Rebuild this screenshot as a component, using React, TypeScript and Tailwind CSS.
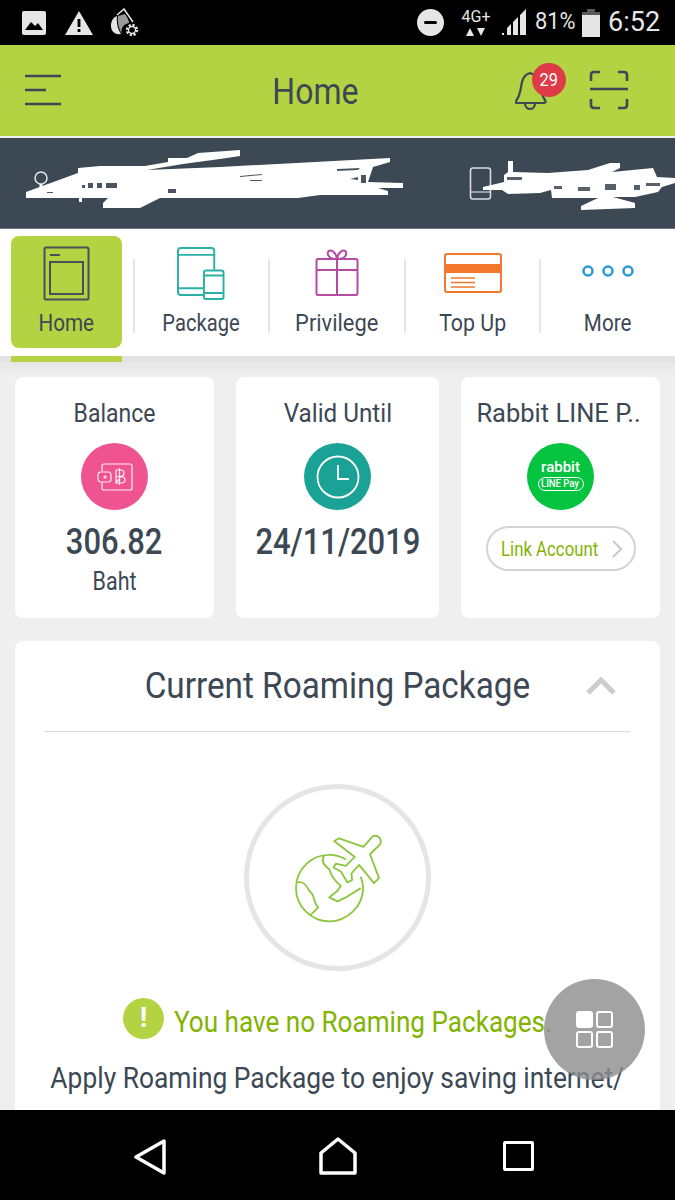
import React from "react";

const Narrow: React.FC<{ children: React.ReactNode; sx?: string; className?: string }> = ({ children, sx = "scale-x-[0.86]", className = "" }) => (
    <span className={`inline-block whitespace-nowrap ${sx} ${className}`}>{children}</span>
);

const StatusBar = () => (
    <div className="h-[45px] bg-black flex items-center text-[#e6e6e6] shrink-0">
        <svg width="26" height="26" viewBox="0 0 26 26" className="ml-[21px]">
            <rect x="1" y="1" width="24" height="24" rx="2" fill="#e6e6e6" />
            <path d="M4 20 L10 12 L14 16 L17 13 L22 20 Z" fill="#000" />
        </svg>
        <svg width="30" height="26" viewBox="0 0 30 26" className="ml-[17px]">
            <path d="M15 1 L29 25 H1 Z" fill="#e6e6e6" />
            <rect x="13.6" y="9" width="2.8" height="8" fill="#000" />
            <rect x="13.6" y="19" width="2.8" height="3" fill="#000" />
        </svg>
        <svg width="30" height="30" viewBox="0 0 30 30" className="ml-[15px]">
            <path d="M2 18 C2 12 5 9 8 8 C7 14 9 22 12 26 C7 27 2 24 2 18 Z" fill="#e6e6e6" />
            <path d="M9 8 L16 6 C18 9 20 12 20 15 C15 16 11 20 13 26 C10 21 8 14 9 8 Z" fill="#9a9a9a" />
            <path d="M8 7 L15 1 L24 14" fill="none" stroke="#e6e6e6" strokeWidth="1.5" />
            <circle cx="23" cy="22" r="5" fill="none" stroke="#e6e6e6" strokeWidth="2.4" strokeDasharray="2.2 1.7" />
            <circle cx="23" cy="22" r="3.500" fill="none" stroke="#e6e6e6" strokeWidth="1.4" />
        </svg>
        <div className="ml-[278px] w-[27px] h-[27px] rounded-full bg-[#e6e6e6] flex items-center justify-center">
            <div className="w-[13px] h-[3px] bg-black rounded-sm" />
        </div>
        <div className="ml-[15px] w-[34px] flex flex-col items-center leading-none">
            <span className="text-[16px] font-['Roboto',sans-serif] whitespace-nowrap">4G+</span>
            <svg width="20" height="8" viewBox="0 0 20 8" className="mt-[3px]">
                <path d="M0 8 L4 0 L8 8 Z M11 0 H19 L15 8 Z" fill="#e6e6e6" />
            </svg>
        </div>
        <svg width="26" height="27" viewBox="0 0 26 27" className="ml-[8px]">
            <path d="M1 26 V24 H3 V26 Z M6 26 V19 L10 15 V26 Z M12 26 V13 L17 8 V26 Z M19 26 V6 L25 0 V26 Z" fill="#e6e6e6" />
        </svg>
        <span className="ml-[8px] text-[23px] font-['Roboto',sans-serif] w-[42px]"><Narrow sx="scale-x-[0.95]" className="origin-left">81%</Narrow></span>
        <svg width="18" height="28" viewBox="0 0 18 28" className="ml-[5px]">
            <path d="M5 0 H13 V3 H18 V28 H0 V3 H5 Z" fill="#5a5a5a" />
            <rect x="0" y="6" width="18" height="22" fill="#e6e6e6" />
        </svg>
        <span className="ml-[8px] text-[27px] font-['Roboto',sans-serif]"><Narrow sx="scale-x-[1]" className="origin-left">6:52</Narrow></span>
    </div>
);

const Header = () => (
    <div className="h-[91px] bg-[#b4d343] flex items-center relative shrink-0">
        <svg width="38" height="32" viewBox="0 0 38 32" className="absolute left-[24px] top-[29px]">
            <path d="M1 2 H37 M1 16 H22 M1 30 H37" stroke="#3c4854" strokeWidth="2.6" />
        </svg>
        <div className="w-full text-center text-[36px] leading-[91px] pt-[3px] text-[#3c4854] font-['Roboto',sans-serif] -translate-x-[22px]">
            <Narrow sx="scale-x-[0.89]">Home</Narrow>
        </div>
        <svg width="34" height="42" viewBox="0 0 34 42" className="absolute left-[515px] top-[25px]">
            <path d="M15 3 C8 5 7 11 6 17 C5 24 4 27 1 31 C0 33 1 33 3 33 H28 C31 33 31 32 30 30 C27 26 26 22 26 17 C25 10 22 5 15 3 Z" fill="none" stroke="#3c4854" strokeWidth="2.2" />
            <path d="M10 33 C10 41 20 41 20 33" fill="none" stroke="#3c4854" strokeWidth="2.2" />
        </svg>
        <div className="absolute left-[532px] top-[18px] w-[34px] h-[34px] rounded-full bg-[#dc3b47] flex items-center justify-center text-white text-[19px] font-['Roboto',sans-serif]">
            <Narrow>29</Narrow>
        </div>
        <svg width="40" height="40" viewBox="0 0 40 40" className="absolute left-[589px] top-[25px]">
            <path d="M2 11 V5 Q2 2 5 2 H11 M29 2 H35 Q38 2 38 5 V11 M2 29 V35 Q2 38 5 38 H11 M29 38 H35 Q38 38 38 35 V29" fill="none" stroke="#3c4854" strokeWidth="2.6" />
            <path d="M1 19 H39" stroke="#3c4854" strokeWidth="2.6" />
        </svg>
    </div>
);

// scribbled-out account name and phone number
const AccountBand = () => (
    <div className="h-[91px] mt-[2px] bg-[#3c4854] border-b border-[#6b7580] relative overflow-hidden shrink-0">
        <svg width="675" height="90" viewBox="0 0 675 90">
            <circle cx="41" cy="40" r="6" fill="none" stroke="#e6e6e6" strokeWidth="1.5" />
            <path d="M41 46 V52" stroke="#fff" strokeWidth="3" />
            <rect x="470.500" y="30" width="20" height="31" rx="2.500" fill="none" stroke="#d8dbde" strokeWidth="1.6" />
            <path d="M471 54 H490" stroke="#d8dbde" strokeWidth="1.2" />
            <path d="M26 54 L78 35 L78 30 L100 28 L145 28 L168 24 L168 20 L187 20 L198 15 L240 12 L240 18 L220 21 L183 26 L147 32 L220 29 L390 20 L390 24 L373 29 L368 44 L403 45 L403 50 L378 50 L388 53 L388 57 L320 57 L298 60 L160 60 L140 70 L103 70 L103 65 L108 60 L26 60 Z" fill="#fff" />
            <path d="M79 60 H82 V64 H79 Z" fill="#fff" />
            <path d="M88 45 H93 V50 H88 Z M97 45 H102 V50 H97 Z M106 45 H117 V50 H106 Z M82 47 H85 V50 H82 Z M168 51 H176 V55 H168 Z M47 54 H53 V55 H47 Z M337 31 L360 30 L358 32 L337 33 Z M361 37 H366 V45 H361 Z M350 41 L358 39 V42 Z M240 38 L262 36 V37 L240 39 Z M250 42 H262 V43 H250 Z" fill="#4a5561" />
            <path d="M483 49 L500 45 L504 44 L504 37 L508 34 L508 23 L513 23 L513 34 L548 35 L588 32 L610 25 L620 25 L620 30 L612 34 L653 30 L657 39 L675 40 L675 45 L662 49 L658 54 L635 59 L613 59 L635 65 L635 70 L581 72 L581 68 L598 60 L552 60 L551 52 L540 55 L508 56 L502 52 L483 52 Z" fill="#fff" />
            <path d="M507 39 H522 V42 H507 Z M578 49 H590 V53 H578 Z M605 46 H616 V52 H605 Z M634 47 H640 V52 H634 Z M646 45 H660 V48 H646 Z M554 48 H562 V51 H554 Z" fill="#56616c" />
        </svg>
    </div>
);

const iconStroke = { fill: "none", strokeWidth: 2 };

const tabs = [
    {
        label: "Home",
        sx: "scale-x-[0.86]",
        icon: (
            <svg width="47" height="55" viewBox="0 0 47 55" {...iconStroke} stroke="#4a5058">
                <rect x="1.500" y="1.500" width="44" height="52" rx="1.500" />
                <rect x="7" y="16" width="33" height="32" />
                <path d="M7 9 H17" />
            </svg>
        ),
    },
    {
        label: "Package",
        sx: "scale-x-[0.84]",
        icon: (
            <svg width="49" height="53" viewBox="0 0 50 54" {...iconStroke} stroke="#2bb1a3">
                <path d="M27 49 H4 Q1 49 1 46 V4 Q1 1 4 1 H35 Q38 1 38 4 V23" />
                <path d="M1 8 H38 M1 42 H27" />
                <rect x="27.500" y="24" width="20" height="29" rx="2" />
                <path d="M27.500 29 H47.500 M27.500 47 H47.500" />
            </svg>
        ),
    },
    {
        label: "Privilege",
        sx: "scale-x-[0.91]",
        icon: (
            <svg width="44" height="48" viewBox="0 0 44 48" {...iconStroke} stroke="#b64ba2">
                <rect x="1.500" y="10" width="41" height="36" rx="1.500" />
                <path d="M1.500 21 H42.500 M22 10 V46" />
                <path d="M22 10 C14 10 12 6 13 3 C15 -1 21 3 22 10 C23 3 29 -1 31 3 C32 6 30 10 22 10 Z" />
            </svg>
        ),
    },
    {
        label: "Top Up",
        sx: "scale-x-[0.89]",
        icon: (
            <svg width="58" height="40" viewBox="0 0 58 40" {...iconStroke} stroke="#f1782c">
                <rect x="1" y="1" width="56" height="38" rx="2" />
                <rect x="1" y="12" width="56" height="7" fill="#f1782c" />
                <path d="M7 25 H31 M7 29.500 H31 M7 34 H31" strokeWidth="1.500" />
            </svg>
        ),
    },
    {
        label: "More",
        sx: "scale-x-[0.86]",
        icon: (
            <svg width="52" height="12" viewBox="0 0 52 12" {...iconStroke} strokeWidth="2.500" stroke="#2a9ad6" className="-mt-[4px]">
                <circle cx="6" cy="6" r="4.500" />
                <circle cx="26" cy="6" r="4.500" />
                <circle cx="46" cy="6" r="4.500" />
            </svg>
        ),
    },
];

const tabClass = (index: number) => {
    if (index === 0) return "w-[111px] bg-[#b4d343] mr-[11px]";
    if (index === 2) return "w-[122px] mx-[6px]";
    return "w-[121px] mx-[6px]";
};

const TabBar = () => (
    <div className="shrink-0">
        <div className="h-[127px] bg-white flex pl-[11px] pr-[1px] pt-[7px]">
            {tabs.map((tab, index) => (
                <React.Fragment key={tab.label}>
                    {index > 0 && <div className="w-[2px] h-[74px] mt-[23px] bg-[#e6e6e6] shrink-0" />}
                    <div className={`h-[112px] flex flex-col items-center rounded-lg ${tabClass(index)}`}>
                        <div className="h-[68px] mt-[3px] flex items-center justify-center">{tab.icon}</div>
                        <div className="text-[24px] leading-[32px] text-[#3c4854] font-['Roboto',sans-serif]">
                            <Narrow sx={tab.sx}>{tab.label}</Narrow>
                        </div>
                    </div>
                </React.Fragment>
            ))}
        </div>
        <div className="h-[6px] bg-[#e3e3e3] pl-[11px]">
            <div className="w-[111px] h-full bg-[#b4d343]" />
        </div>
    </div>
);

const Card: React.FC<{ title: string; sx: string; className: string; children: React.ReactNode }> = ({ title, sx, className, children }) => (
    <div className={`h-[241px] bg-white rounded-lg flex flex-col items-center ${className}`}>
        <div className="mt-[20px] text-[25px] leading-[34px] text-[#3c4854] font-['Roboto',sans-serif]">
            <Narrow sx={sx}>{title}</Narrow>
        </div>
        {children}
    </div>
);

const SummaryCards = () => (
    <div className="flex px-[15px] gap-[22px]">
        <Card title="Balance" sx="scale-x-[0.92]" className="w-[199px]">
            <div className="mt-[12px] w-[67px] h-[67px] rounded-full bg-[#ef5491] flex items-center justify-center">
                <svg width="36" height="28" viewBox="0 0 36 28" fill="none" stroke="#fff" strokeWidth="1.200" className="opacity-90">
                    <path d="M5 8 V3 Q5 1 7 1 H33 Q35 1 35 3 V25 Q35 27 33 27 H7 Q5 27 5 25 V19" />
                    <rect x="1" y="9" width="13" height="10" rx="3" />
                    <circle cx="8" cy="14" r="1" fill="#fff" />
                    <path d="M19 7 H24 Q27 7 27 10 Q27 13 24 13.500 H19 M24 13.500 Q28 14 28 17 Q28 20 24 20 H19 Z M19 7 V20 M22.500 5 V22" />
                </svg>
            </div>
            <div className="mt-[10px] text-[36px] leading-[44px] font-medium text-[#3c4854] font-['Roboto',sans-serif]">
                <Narrow>306.82</Narrow>
            </div>
            <div className="mt-[3px] text-[25px] leading-[30px] text-[#3c4854] font-['Roboto',sans-serif]">
                <Narrow>Baht</Narrow>
            </div>
        </Card>
        <Card title="Valid Until" sx="scale-x-[0.97]" className="w-[203px]">
            <div className="mt-[12px] w-[67px] h-[67px] rounded-full bg-[#1ba296] flex items-center justify-center">
                <svg width="44" height="44" viewBox="0 0 44 44" fill="none" stroke="#fff" strokeWidth="1.800">
                    <circle cx="22" cy="22" r="20.500" />
                    <path d="M22 10 V24 H33" />
                </svg>
            </div>
            <div className="mt-[10px] text-[36px] leading-[44px] font-medium text-[#3c4854] font-['Roboto',sans-serif]">
                <Narrow>24/11/2019</Narrow>
            </div>
        </Card>
        <Card title="Rabbit LINE P.." sx="scale-x-[1.02] -translate-x-[2px]" className="w-[199px]">
            <div className="mt-[12px] w-[67px] h-[67px] rounded-full bg-[#06c43f] flex flex-col items-center justify-center text-white font-['Roboto',sans-serif] font-medium leading-none">
                <span className="text-[15px] -mt-[3px]">rabbit</span>
                <span className="mt-[2px] h-[14px] w-[46px] border-[1.5px] border-white rounded-full text-[10px] flex items-center justify-center"><Narrow sx="scale-x-[0.95]">LINE Pay</Narrow></span>
            </div>
            <div className="mt-[16px] w-[150px] h-[45px] border-2 border-[#d3d3d3] rounded-full flex items-center pl-[13px] text-[#82b300] text-[20px] font-['Roboto',sans-serif]">
                <span className="w-[96px]"><Narrow sx="scale-x-[0.84]" className="origin-left">Link Account</Narrow></span>
                <svg width="10" height="18" viewBox="0 0 10 18" fill="none" stroke="#c9c9c9" strokeWidth="2" className="ml-[15px]">
                    <path d="M1 1 L9 9 L1 17" />
                </svg>
            </div>
        </Card>
    </div>
);

const RoamingCard = () => (
    <div className="mx-[15px] mt-[23px] flex-1 min-h-0 bg-white rounded-t-lg overflow-hidden flex flex-col items-center relative">
        <div className="h-[91px] w-[585px] border-b border-[#dddddd] shrink-0 flex items-center justify-center text-[36px] text-[#3c4854] font-['Roboto',sans-serif]">
            <Narrow sx="scale-x-[0.925]">Current Roaming Package</Narrow>
        </div>
        <svg width="30" height="18" viewBox="0 0 30 18" fill="none" stroke="#cccccc" strokeWidth="5" className="absolute left-[571px] top-[36px]">
            <path d="M2 16 L15 3 L28 16" />
        </svg>
        <div className="mt-[52px] w-[187px] h-[187px] rounded-full border-[5px] border-[#e5e5e5] flex items-center justify-center shrink-0">
            <svg width="93" height="93" viewBox="180 180 280 280" fill="none" stroke="#8cc63f" strokeWidth="5.500" strokeLinejoin="round">
                <path d="M310 210 L325 202 L398 228 L425 197 C440 188 456 205 448 220 L418 250 L445 322 L430 337 L385 282 L362 308 L364 328 L350 335 L330 302 L308 290 L315 278 L345 285 L372 258 Z" />
                <path d="M345 266 C330 256 312 252 295 252 C240 252 195 297 195 352 C195 405 240 452 295 452 C350 452 397 405 397 352 C397 340 394 330 390 318" />
                <path d="M280 254 C270 270 280 285 295 295 C300 310 310 330 330 345 L320 360 L295 380 L320 392 L345 380 L390 352" />
                <path d="M197 335 C215 330 225 340 235 360 C255 375 245 395 262 410 L240 432" />
            </svg>
        </div>
        <div className="mt-[27px] h-[40px] w-full flex items-center pl-[108px] shrink-0">
            <div className="w-[41px] h-[41px] rounded-full bg-[#b4d343] flex items-center justify-center text-white text-[28px] font-bold font-['Roboto',sans-serif] leading-none">!</div>
            <div className="ml-[10px] pt-[7px] text-[30px] text-[#82b300] font-['Roboto',sans-serif]">
                <Narrow sx="scale-x-[0.87]" className="origin-left">You have no Roaming Packages.</Narrow>
            </div>
        </div>
        <div className="mt-[20px] text-[29px] leading-[40px] text-[#3c4854] font-['Roboto',sans-serif] shrink-0">
            <Narrow sx="scale-x-[0.91]">Apply Roaming Package to enjoy saving internet/</Narrow>
        </div>
    </div>
);

const NavBar = () => (
    <div className="h-[90px] bg-black flex items-center shrink-0 relative">
        <svg width="32" height="36" viewBox="0 0 32 36" fill="none" stroke="#fff" strokeWidth="3.500" strokeLinejoin="round" className="ml-[134px] mt-[4px]">
            <path d="M30 2 V34 L2 18 Z" />
        </svg>
        <svg width="38" height="38" viewBox="0 0 38 38" fill="none" stroke="#fff" strokeWidth="3.500" strokeLinejoin="round" className="ml-[153px] mt-[2px]">
            <path d="M2 36 V16 L19 2 L36 16 V36 Z" />
        </svg>
        <div className="ml-[146px] mt-[1px] w-[31px] h-[30px] border-[3.5px] border-white rounded-[2px]" />
    </div>
);

export default function App() {
    return (
        <div className="w-[675px] h-[1200px] flex flex-col bg-[#efefef] overflow-hidden relative">
            <StatusBar />
            <Header />
            <AccountBand />
            <TabBar />
            <div className="h-[15px] bg-gradient-to-b from-[#e6e6e6] to-[#efefef] shrink-0" />
            <SummaryCards />
            <RoamingCard />
            <NavBar />
            <div className="absolute left-[544px] top-[979px] w-[101px] h-[101px] rounded-full bg-[#8c8c8c]/80 flex items-center justify-center">
                <div className="grid grid-cols-2 gap-[3px]">
                    <div className="w-[17px] h-[17px] rounded-[3px] bg-white" />
                    <div className="w-[17px] h-[17px] rounded-[3px] border-2 border-white" />
                    <div className="w-[17px] h-[17px] rounded-[3px] border-2 border-white" />
                    <div className="w-[17px] h-[17px] rounded-[3px] border-2 border-white" />
                </div>
            </div>
        </div>
    );
}
